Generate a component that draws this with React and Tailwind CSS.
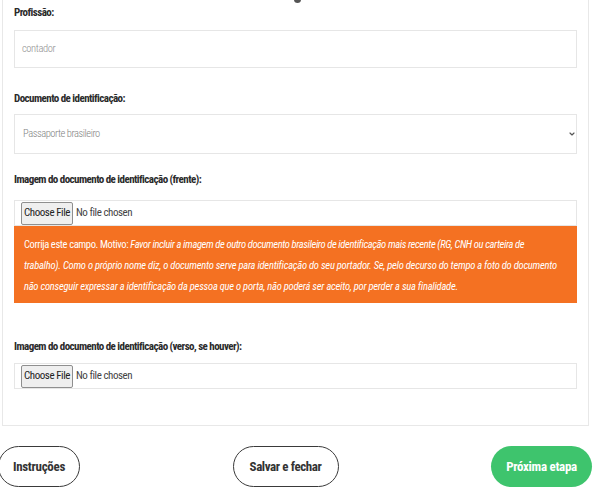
import { ChevronDown } from "lucide-react";

const font = { fontFamily: 'Roboto, "Open Sans", "Liberation Sans", sans-serif' };

function Label({ children, className = "" }) {
  return (
    <p className={`text-[11px] leading-[16px] font-bold text-[#2a2a2a] font-stretch-[75%] tracking-[-0.55px] whitespace-nowrap ${className}`}>
      {children}
    </p>
  );
}

function FileField({ className = "" }) {
  return (
    <div className={`h-[26px] border border-[#e6e6e6] flex items-center pl-[6px] gap-[3px] ${className}`}>
      <span className="h-[23px] w-[52px] flex items-center justify-center bg-[#efefef] border border-[#8f8f8f] rounded-[2px] text-[11px] text-[#222] font-stretch-[75%] tracking-[-0.43px]">
        Choose File
      </span>
      <span className="text-[11px] text-[#444] font-stretch-[75%] tracking-[-0.45px]">No file chosen</span>
    </div>
  );
}

export default function App() {
  return (
    <div style={font} className="w-[595px] h-[495px] overflow-hidden bg-white relative">
      <div className="absolute left-[294px] top-[-4px] w-[7px] h-[7px] rounded-full bg-[#555]" />
      <div className="ml-[2px] w-[587px] border border-t-0 border-[#e8e8e8] px-[11px] pt-[5px] pb-[36px]">
        <Label>Profissão:</Label>
        <div className="mt-[9px] h-[38px] border border-[#e6e6e6] flex items-center px-[7px] text-[10.5px] font-light text-[#8f8f8f] font-stretch-[75%] tracking-[-0.4px]">
          contador
        </div>

        <Label className="mt-[23px]">Documento de identificação:</Label>
        <div className="mt-[7px] h-[40px] border border-[#e6e6e6] flex items-center justify-between pl-[8px] pr-0 text-[10.5px] font-light text-[#7f7f7f] font-stretch-[75%] tracking-[-0.45px]">
          <span>Passaporte brasileiro</span>
          <ChevronDown size={8} strokeWidth={3.5} className="text-[#555]" />
        </div>

        <Label className="mt-[18px]">Imagem do documento de identificação (frente):</Label>
        <FileField className="mt-[12px]" />
        <div className="h-[77px] bg-[#f47122] px-[10px] pt-[8px] text-white text-[10.5px] leading-[21px] font-stretch-[75%] tracking-[-0.22px] whitespace-nowrap">
          <p className="tracking-[-0.37px]">
            Corrija este campo. Motivo:{" "}
            <i>Favor incluir a imagem de outro documento brasileiro de identificação mais recente (RG, CNH ou carteira de</i>
          </p>
          <p>
            <i>trabalho). Como o próprio nome diz, o documento serve para identificação do seu portador. Se, pelo decurso do tempo a foto do documento</i>
          </p>
          <p>
            <i>não conseguir expressar a identificação da pessoa que o porta, não poderá ser aceito, por perder a sua finalidade.</i>
          </p>
        </div>

        <Label className="mt-[36px]">Imagem do documento de identificação (verso, se houver):</Label>
        <FileField className="mt-[8px]" />
      </div>

      <div className="ml-[-2px] w-[594px] mt-[20px] flex justify-between items-center">
        <button className="h-[41px] w-[82px] rounded-full border-[1.5px] border-[#3a3a3a] text-[13px] font-bold text-[#333] font-stretch-[75%] tracking-[-0.3px]">
          Instruções
        </button>
        <button className="h-[41px] w-[106px] rounded-full border-[1.5px] border-[#3a3a3a] text-[13px] font-bold text-[#333] font-stretch-[75%] tracking-[-0.4px]">
          Salvar e fechar
        </button>
        <button className="h-[41px] w-[101px] rounded-full bg-[#3ec46d] text-[13px] font-bold text-white font-stretch-[75%] tracking-[-0.3px]">
          Próxima etapa
        </button>
      </div>
    </div>
  );
}
